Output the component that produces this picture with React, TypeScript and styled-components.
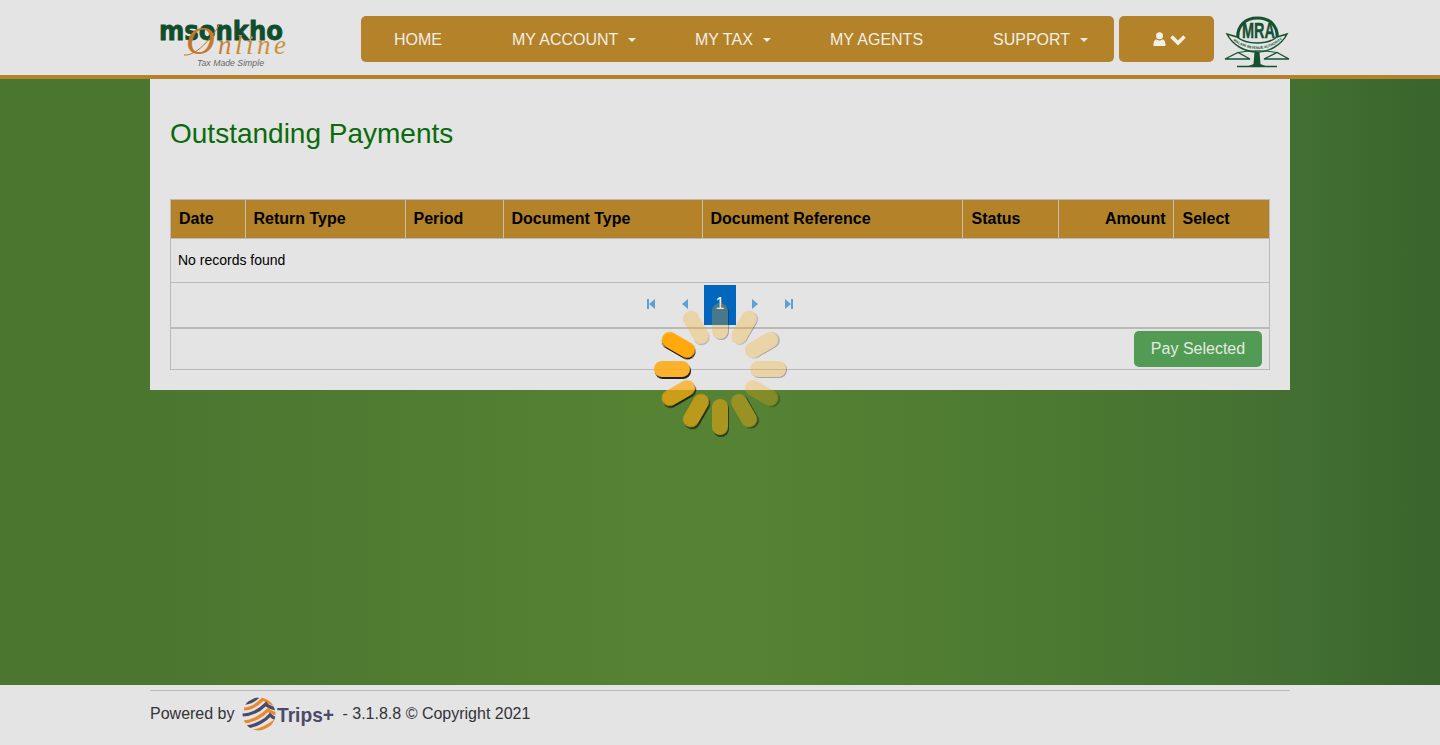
import React from "react";
import styled, { createGlobalStyle } from "styled-components";

const Global = createGlobalStyle`
  html, body { margin: 0; padding: 0; height: 100%; }
  body { font-family: "Liberation Sans", Arial, sans-serif; font-size: 14px; color: #000; background: #e4e4e4; }
  #root { height: 100%; }
`;

const Page = styled.div`
  position: relative;
  height: 745px;
  display: flex;
  flex-direction: column;
  overflow: hidden;
`;

const Header = styled.header`
  height: 75px;
  flex: none;
  box-sizing: content-box;
  background: #e4e4e4;
  border-bottom: 4px solid #b38229;
  display: flex;
  justify-content: center;
`;

const HeaderInner = styled.div`
  width: 1140px;
  display: flex;
  align-items: flex-start;
`;

const LogoSlot = styled.div`
  width: 211px;
  flex: none;
  padding-top: 18px;
  padding-left: 8px;
  box-sizing: border-box;
  height: 75px;
`;

const NavBar = styled.nav`
  margin-top: 16px;
  width: 753px;
  height: 46px;
  flex: none;
  background: #b38229;
  border-radius: 5px;
  display: flex;
  align-items: center;
  padding: 2px 0 0 33px;
  box-sizing: border-box;
  color: #f2efe6;
  font-size: 16px;
`;

const NavItem = styled.span<{ $w: number }>`
  width: ${(p) => p.$w}px;
  flex: none;
  display: flex;
  align-items: center;
  white-space: nowrap;
`;

const Caret = styled.i`
  width: 0;
  height: 0;
  margin-left: 10px;
  border-left: 4px solid transparent;
  border-right: 4px solid transparent;
  border-top: 4px solid #f2efe6;
`;

const UserButton = styled.div`
  margin-top: 16px;
  margin-left: 5px;
  width: 95px;
  height: 46px;
  flex: none;
  background: #b38229;
  border-radius: 5px;
  display: flex;
  align-items: center;
  justify-content: center;
  gap: 4px;
  padding: 1px 0 0 5px;
  box-sizing: border-box;
`;

const MraSlot = styled.div`
  margin-left: 10px;
  margin-top: 15px;
  width: 66px;
  height: 54px;
  flex: none;
`;

const Main = styled.main`
  flex: 1;
  display: flex;
  justify-content: center;
  align-items: flex-start;
  background: linear-gradient(to right, #4a7630 0%, #4a7630 10%, #558233 45%, #558233 52%, #4c7a31 72%, #437032 89.500%, #39642c 100%);
`;

const Card = styled.section`
  width: 1140px;
  height: 311px;
  box-sizing: border-box;
  background: #e4e4e4;
  padding: 0 20px;
`;

const Title = styled.h2`
  margin: 0;
  padding-top: 38px;
  height: 120px;
  box-sizing: border-box;
  font-size: 28px;
  line-height: 33px;
  font-weight: 400;
  color: #0a6b0a;
`;

const TableFrame = styled.div`
  border: 1px solid #b9b9b9;
  width: 1100px;
  box-sizing: border-box;
  height: 171px;
`;

const Grid = styled.table`
  width: 1098px;
  table-layout: fixed;
  border-collapse: collapse;
`;

const HeadCell = styled.th<{ $right?: boolean; $pad?: number }>`
  height: 38px;
  padding: 0 ${(p) => (p.$right ? 7 : 8)}px 0 ${(p) => p.$pad ?? 8}px;
  font-size: 16px;
  font-weight: 700;
  color: #000;
  background: #b38229;
  text-align: ${(p) => (p.$right ? "right" : "left")};
  border-left: 1px solid #c9c0ac;
  border-bottom: 1px solid #b9b9b9;
  &:first-child { border-left: 0; }
`;

const BodyCell = styled.td`
  height: 44px;
  padding: 0 7px 2px;
  box-sizing: border-box;
  font-size: 14px;
  border-bottom: 1px solid #b9b9b9;
`;

const Pager = styled.div`
  height: 46px;
  display: flex;
  justify-content: center;
  align-items: flex-start;
  padding-top: 2px;
  box-sizing: border-box;
  border-bottom: 2px solid #b9b9b9;
`;

const PagerIcon = styled.span<{ $w: number }>`
  width: ${(p) => p.$w}px;
  height: 40px;
  display: flex;
  align-items: center;
  justify-content: center;
  padding-bottom: 2px;
  box-sizing: border-box;
`;

const PageNum = styled.span`
  width: 32px;
  height: 40px;
  display: flex;
  align-items: center;
  justify-content: center;
  background: #0366bd;
  color: #fff;
  font-size: 16px;
  padding-bottom: 2px;
  box-sizing: border-box;
`;

const Actions = styled.div`
  display: flex;
  justify-content: flex-end;
  padding: 2px 7px 0 0;
`;

const PayButton = styled.button`
  width: 128px;
  height: 36px;
  border: 0;
  border-radius: 5px;
  background: #529b54;
  color: #e3ebe1;
  font: 400 16px "Liberation Sans", Arial, sans-serif;
  padding: 0;
`;

const Footer = styled.footer`
  height: 60px;
  flex: none;
  background: #e4e4e4;
  display: flex;
  justify-content: center;
`;

const FooterInner = styled.div`
  width: 1140px;
  margin-top: 5px;
  border-top: 1px solid #b9b9b9;
  display: flex;
  align-items: flex-start;
  padding-top: 6px;
  box-sizing: border-box;
  height: 46px;
  color: #33333a;
  font-size: 16px;
`;

const FooterText = styled.span`
  line-height: 34px;
`;

const TripsLogo = styled.div`
  margin-left: 7px;
  margin-right: 3px;
  width: 98px;
  height: 36px;
  flex: none;
`;

const SpinnerWrap = styled.div`
  position: absolute;
  left: 654px;
  top: 303px;
  width: 132px;
  height: 132px;
  pointer-events: none;
`;

const SpinnerBar = styled.div<{ $angle: number; $o: number }>`
  position: absolute;
  left: 58px;
  top: 0;
  width: 16px;
  height: 36px;
  border-radius: 8px;
  background: #ffa90c;
  transform-origin: 8px 66px;
  transform: rotate(${(p) => p.$angle}deg);
  opacity: ${(p) => p.$o};
  filter: drop-shadow(${(p) => {
    const r = (-p.$angle * Math.PI) / 180;
    const x = 1;
    const y = 1.5;
    const rx = x * Math.cos(r) - y * Math.sin(r);
    const ry = x * Math.sin(r) + y * Math.cos(r);
    return `${rx.toFixed(2)}px ${ry.toFixed(2)}px 0.5px #000`;
  }});
`;

function MsonkhoLogo() {
  return (
    <svg width="145" height="52" viewBox="0 0 145 52">
      <defs>
        <linearGradient id="onlineGold" x1="0" x2="1" y1="0" y2="0">
          <stop offset="0" stopColor="#c4722a" />
          <stop offset="1" stopColor="#c9993c" />
        </linearGradient>
      </defs>
      <text x="1" y="22" fontFamily="'DejaVu Sans', sans-serif" fontWeight="700" fontSize="26" fill="#0f4d2c" stroke="#0f4d2c" strokeWidth="0.8" textLength="124" lengthAdjust="spacingAndGlyphs">msonkho</text>
      <path d="M26 37 C34 38 44 30 52 20 C58 12 62 8 60 6" fill="none" stroke="#c4722a" strokeWidth="1" />
      <text x="28" y="36" fontFamily="'Liberation Serif', serif" fontStyle="italic" fill="url(#onlineGold)">
        <tspan fontSize="40">O</tspan>
        <tspan x="60" fontSize="27" letterSpacing="3.500">nline</tspan>
      </text>
      <text x="39" y="48" fontFamily="'Liberation Sans', sans-serif" fontStyle="italic" fontSize="9" fill="#666" textLength="67" lengthAdjust="spacingAndGlyphs">Tax Made Simple</text>
    </svg>
  );
}

function MraLogo() {
  const g = "#15522f";
  return (
    <svg width="76" height="54" viewBox="0 0 76 54">
      <defs>
        <path id="mraBand" d="M6 23 C15 31 25 34 33 34 C41 34 51 31 60 23" />
      </defs>
      <path d="M14 26 C12 10 22 3 33.500 3 C45 3 55 10 53 26" fill="none" stroke={g} strokeWidth="3.200" />
      <text x="18" y="23" fontFamily="'Liberation Sans', sans-serif" fontWeight="700" fontSize="22" fill={g} stroke={g} strokeWidth="0.4" textLength="33" lengthAdjust="spacingAndGlyphs">MRA</text>
      <path d="M3 19 C9 31 22 37 33 37 C44 37 57 31 63 19 L53 22 C47 27 40 28 33 28 C26 28 19 27 13 22 Z" fill="#e4e4e4" stroke={g} strokeWidth="1.500" />
      <text fontFamily="'Liberation Sans', sans-serif" fontWeight="700" fontSize="3.500" fill={g}>
        <textPath href="#mraBand" startOffset="4">MALAWI REVENUE AUTHORITY</textPath>
      </text>
      <path d="M30.500 37 h5 l1 12 q2 1 5 2 h-17 q3 -1 5 -2 z" fill={g} />
      <path d="M13 51.500 H53" stroke={g} strokeWidth="1.500" />
      <path d="M1 44 H26 L14 37.500 Z M40 44 H65 L53 37.500 Z" fill="none" stroke={g} strokeWidth="1.300" />
      <path d="M14 37.500 Q33 34 53 37.500" fill="none" stroke={g} strokeWidth="1" />
    </svg>
  );
}

function TripsMark() {
  const orange = "#ea8a2e";
  const navy = "#4b4a6b";
  return (
    <svg width="98" height="36" viewBox="0 0 98 36">
      <defs>
        <clipPath id="tripsGlobe"><circle cx="17" cy="17" r="16.500" /></clipPath>
      </defs>
      <g clipPath="url(#tripsGlobe)" fill="none" strokeWidth="3.200">
        <path d="M0 6 C8 7 12 3 16 0" stroke={navy} />
        <path d="M2 12 C10 12 16 7 21 2 C25 5 29 6 34 8" stroke={orange} />
        <path d="M0 18 C10 18 18 13 24 7 C26 10 30 11 34 12" stroke={navy} />
        <path d="M1 25 C10 25 20 19 26 13 C28 15 31 16 35 17" stroke={orange} />
        <path d="M4 30 C14 29 24 23 28 18 C30 20 32 21 35 22" stroke={navy} />
        <path d="M9 34 C18 34 26 29 33 24" stroke={orange} />
      </g>
      <text x="35" y="25" fontFamily="'Liberation Sans', sans-serif" fontWeight="700" fontSize="21" fill="#4b4a68" textLength="57" lengthAdjust="spacingAndGlyphs">Trips+</text>
    </svg>
  );
}

const tri = "#5e9fd8";
const First = () => (
  <svg width="8" height="10" viewBox="0 0 8 10"><path d="M0 0h2v10H0zM8 0v10L2 5z" fill={tri} /></svg>
);
const Prev = () => (
  <svg width="6" height="10" viewBox="0 0 6 10"><path d="M6 0v10L0 5z" fill={tri} /></svg>
);
const Next = () => (
  <svg width="6" height="10" viewBox="0 0 6 10"><path d="M0 0v10l6-5z" fill={tri} /></svg>
);
const Last = () => (
  <svg width="8" height="10" viewBox="0 0 8 10"><path d="M6 0h2v10H6zM0 0v10l6-5z" fill={tri} /></svg>
);

const columns: { label: string; w: number; right?: boolean; pad?: number }[] = [
  { label: "Date", w: 74 },
  { label: "Return Type", w: 160 },
  { label: "Period", w: 98 },
  { label: "Document Type", w: 199 },
  { label: "Document Reference", w: 260 },
  { label: "Status", w: 96, pad: 9 },
  { label: "Amount", w: 115, right: true },
  { label: "Select", w: 96, pad: 9 },
];

// opacity by clock step; index 0 = 12 o'clock, going clockwise
const opacities = [0.27, 0.27, 0.27, 0.27, 0.27, 0.4, 0.5, 0.6, 0.7, 0.85, 1, 0.27];

export default function App() {
  return (
    <Page>
      <Global />
      <Header>
        <HeaderInner>
          <LogoSlot><MsonkhoLogo /></LogoSlot>
          <NavBar>
            <NavItem $w={118}>HOME</NavItem>
            <NavItem $w={183}>MY ACCOUNT<Caret /></NavItem>
            <NavItem $w={135}>MY TAX<Caret /></NavItem>
            <NavItem $w={163}>MY AGENTS</NavItem>
            <NavItem $w={110}>SUPPORT<Caret /></NavItem>
          </NavBar>
          <UserButton>
            <svg width="13" height="15" viewBox="0 0 13 15">
              <circle cx="6.500" cy="3.800" r="3.500" fill="#f2efe6" />
              <path d="M0.500 14 C0.200 9 2 7.500 3.800 7.500 C5.500 8.700 7.500 8.700 9.200 7.500 C11 7.500 12.800 9 12.500 14 Z" fill="#f2efe6" />
            </svg>
            <svg width="16" height="12" viewBox="0 0 16 12">
              <path d="M1.500 2.500 L8 9 L14.500 2.500" fill="none" stroke="#f2efe6" strokeWidth="3.500" />
            </svg>
          </UserButton>
          <MraSlot><MraLogo /></MraSlot>
        </HeaderInner>
      </Header>
      <Main>
        <Card>
          <Title>Outstanding Payments</Title>
          <TableFrame>
            <Grid>
              <colgroup>
                {columns.map((c) => <col key={c.label} width={c.w} />)}
              </colgroup>
              <thead>
                <tr>
                  {columns.map((c) => <HeadCell key={c.label} $right={c.right} $pad={c.pad}>{c.label}</HeadCell>)}
                </tr>
              </thead>
              <tbody>
                <tr><BodyCell colSpan={8}>No records found</BodyCell></tr>
              </tbody>
            </Grid>
            <Pager>
              <PagerIcon $w={30}><First /></PagerIcon>
              <PagerIcon $w={38}><Prev /></PagerIcon>
              <PageNum>1</PageNum>
              <PagerIcon $w={38}><Next /></PagerIcon>
              <PagerIcon $w={30}><Last /></PagerIcon>
            </Pager>
            <Actions><PayButton>Pay Selected</PayButton></Actions>
          </TableFrame>
        </Card>
      </Main>
      <Footer>
        <FooterInner>
          <FooterText>Powered by</FooterText>
          <TripsLogo><TripsMark /></TripsLogo>
          <FooterText>- 3.1.8.8 © Copyright 2021</FooterText>
        </FooterInner>
      </Footer>
      <SpinnerWrap>
        {opacities.map((o, i) => <SpinnerBar key={i} $angle={i * 30} $o={o} />)}
      </SpinnerWrap>
    </Page>
  );
}
